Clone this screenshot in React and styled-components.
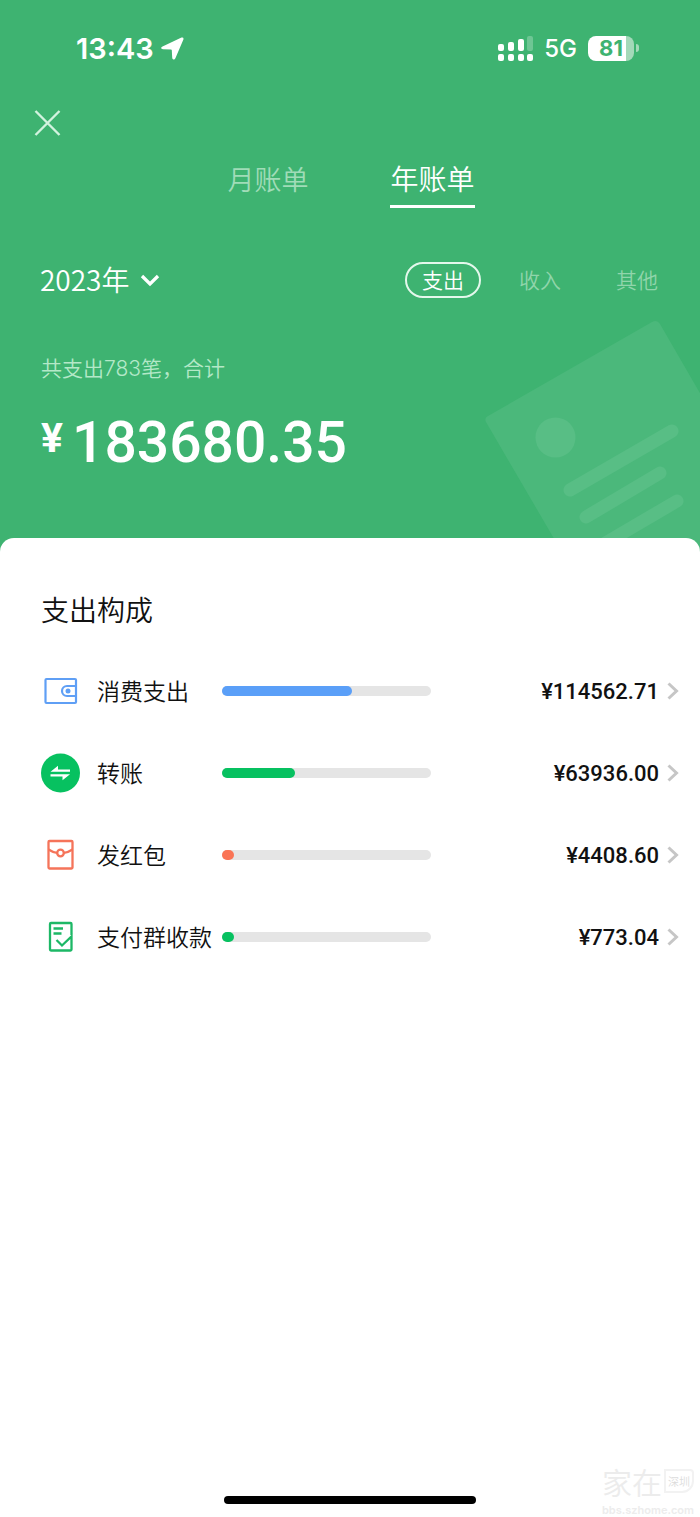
import React, { useState } from "react";
import styled, { createGlobalStyle } from "styled-components";

const GlobalStyle = createGlobalStyle`
  * {
    box-sizing: border-box;
  }

  body {
    margin: 0;
    background: #fff;
    color: #111;
    font-family: "Noto Sans CJK SC", "Noto Sans", sans-serif;
    font-weight: 350;
  }

  button,
  select {
    margin: 0;
    padding: 0;
    border: 0;
    background: none;
    color: inherit;
    font: inherit;
    cursor: pointer;
  }
`;

const Page = styled.div`
  position: relative;
  display: flex;
  flex-direction: column;
  min-height: 100vh;
`;

const Header = styled.header`
  position: relative;
  overflow: hidden;
  padding-bottom: 79px;
  background: #3eb371;
  color: #fff;
`;

const StatusBar = styled.div`
  display: flex;
  align-items: center;
  justify-content: space-between;
  height: 96px;
  padding: 0 61px 0 76px;
  font-family: Inter, sans-serif;
`;

const StatusGroup = styled.div`
  display: flex;
  align-items: center;
  gap: ${({ $gap }) => $gap}px;
`;

const Clock = styled.span`
  font-size: 29px;
  font-weight: 600;
`;

const Network = styled.span`
  font-size: 24px;
  font-weight: 500;
`;

const Battery = styled.div`
  display: flex;
  align-items: center;
  gap: 2px;
`;

const BatteryBody = styled.span`
  width: 46px;
  border-radius: 8px;
  background: linear-gradient(90deg, #fff 82%, #a3d9b9 82%);
  color: #3eb371;
  font-size: 22px;
  font-weight: 700;
  line-height: 25px;
  text-align: center;
`;

const BatteryTip = styled.span`
  width: 3px;
  height: 8px;
  border-radius: 0 4px 4px 0;
  background: #a3d9b9;
`;

const CloseRow = styled.div`
  display: flex;
  align-items: center;
  height: 54px;
  padding-left: 34px;
`;

const CloseButton = styled.button`
  display: flex;
`;

const Tabs = styled.nav`
  display: flex;
  justify-content: center;
  gap: 82px;
  padding: 8px 0 0 2px;
`;

const Tab = styled.button`
  height: 50px;
  padding-bottom: 6px;
  border-bottom: 3px solid ${({ $active }) => ($active ? "#fff" : "transparent")};
  color: ${({ $active }) => ($active ? "#fff" : "#a0dcb8")};
  font-size: ${({ $active }) => ($active ? 28 : 27)}px;
  line-height: 41px;
`;

const FilterRow = styled.div`
  display: flex;
  align-items: center;
  justify-content: space-between;
  padding: 54px 25px 0 40px;
`;

const YearPicker = styled.label`
  display: flex;
  align-items: center;
  gap: 10px;
`;

const YearSelect = styled.select`
  appearance: none;
  outline: none;
  height: 36px;
  padding-bottom: 2px;
  font-size: 28px;
  line-height: 34px;

  option {
    color: #191919;
  }
`;

const Chips = styled.div`
  display: flex;
  gap: 21px;
`;

const Chip = styled.button`
  height: 36px;
  padding: 0 15px 2px;
  border: 2px solid ${({ $active }) => ($active ? "#e4f8ec" : "transparent")};
  border-radius: 18px;
  color: ${({ $active }) => ($active ? "#fff" : "#90d5ab")};
  font-size: 21px;
  line-height: 30px;
`;

const Summary = styled.p`
  margin: 56px 0 0;
  padding: 0 41px;
  color: #b4e8c8;
  font-family: Inter, "Noto Sans CJK SC", sans-serif;
  font-size: 21px;
  line-height: 30px;
`;

const Total = styled.div`
  display: flex;
  align-items: flex-start;
  gap: 9px;
  margin-top: 27px;
  padding: 0 41px;
  font-family: Roboto, sans-serif;
  font-size: 57px;
  font-weight: 500;
  line-height: 64px;
`;

const Currency = styled.span`
  font-size: 41px;
  font-weight: 700;
  line-height: 54px;
`;

const BillArt = styled.svg`
  position: absolute;
  right: 0;
  bottom: 0;
`;

const Card = styled.main`
  position: relative;
  flex: 1;
  margin-top: -16px;
  padding: 51px 21px 40px 41px;
  border-radius: 14px 14px 0 0;
  background: #fff;
`;

const CardTitle = styled.h2`
  margin: 0 0 21px;
  font-size: 28px;
  font-weight: 350;
  line-height: 40px;
`;

const List = styled.ul`
  margin: 0;
  padding: 0;
  list-style: none;
`;

const Row = styled.button`
  display: grid;
  grid-template-columns: 40px 125px minmax(0, 1fr) minmax(0, 1fr) 12px;
  align-items: center;
  width: 100%;
  height: 82px;
  text-align: left;
`;

const RowIcon = styled.svg`
  display: block;
`;

const RowLabel = styled.span`
  padding: 0 0 2px 16px;
  font-size: 23px;
  line-height: 32px;
  white-space: nowrap;
`;

const Track = styled.span`
  display: block;
  height: 10px;
  margin: 0 6px 0 16px;
  border-radius: 5px;
  background: #e5e5e5;
`;

const Fill = styled.span`
  display: block;
  height: 10px;
  min-width: 12px;
  border-radius: 5px;
  background: ${({ $color }) => $color};
`;

const Amount = styled.span`
  padding-right: 8px;
  font-family: Roboto, sans-serif;
  font-size: 22px;
  font-weight: 500;
  text-align: right;
`;

const HomeBar = styled.div`
  align-self: center;
  width: 36%;
  height: 8px;
  margin-bottom: 13px;
  border-radius: 4px;
  background: #000;
`;

const Watermark = styled.div`
  position: absolute;
  right: 6px;
  bottom: 0;
  display: flex;
  flex-direction: column;
  color: #ececec;
`;

const WatermarkTop = styled.div`
  display: flex;
  align-items: center;
  gap: 2px;
  font-size: 30px;
  line-height: 44px;
`;

const WatermarkCity = styled.span`
  padding: 0 2px;
  border: 2px solid #f2f2f2;
  border-radius: 0 4px 12px 0;
  color: #dcdcdc;
  font-size: 11px;
  line-height: 20px;
`;

const WatermarkSite = styled.span`
  font-family: Inter, sans-serif;
  font-size: 11px;
  font-weight: 600;
  line-height: 14px;
`;

const WalletIcon = () => (
  <RowIcon width="40" height="40" viewBox="0 0 40 40" fill="none" stroke="#5f9ff5" strokeWidth="2.2">
    <rect x="4.500" y="8" width="30.500" height="24" rx="1" />
    <path d="M35 15H26a5 5 0 0 0 0 10H35" />
    <circle cx="27" cy="20" r="2.500" fill="#5f9ff5" stroke="none" />
  </RowIcon>
);

const TransferIcon = () => (
  <RowIcon width="40" height="40" viewBox="0 0 40 40">
    <circle cx="19.500" cy="20" r="19.500" fill="#07c160" />
    <path d="M9.500 18.800L17 12.800V16.600H29V18.800z" fill="#fff" />
    <path d="M29 21.200L21.500 27.200V23.400H9.500V21.200z" fill="#fff" />
  </RowIcon>
);

const RedPacketIcon = () => (
  <RowIcon width="40" height="40" viewBox="0 0 40 40" fill="none" stroke="#f5745a" strokeWidth="2.300">
    <rect x="7.500" y="6" width="24" height="27.500" rx="1" />
    <path d="M7.500 14.500c3 2 5.500 3 8.500 3.300M23 17.800c3-.3 5.500-1.300 8.500-3.300" />
    <circle cx="19.500" cy="18" r="3.300" />
  </RowIcon>
);

const GroupPayIcon = () => (
  <RowIcon width="40" height="40" viewBox="0 0 40 40" fill="none" stroke="#1db866" strokeWidth="2.300">
    <path d="M30.500 18V7a1 1 0 0 0-1-1H10a1 1 0 0 0-1 1V32.500a1 1 0 0 0 1 1H29.500a1 1 0 0 0 1-1V19.500L21 28.500L15.500 23" />
    <path d="M12.500 11.500H22M12.500 16.500H20.500" />
  </RowIcon>
);

const Chevron = () => (
  <svg width="12" height="18" viewBox="0 0 12 18" fill="none" stroke="#c6c6c6" strokeWidth="3">
    <path d="M1.500 1.500L9.500 9L1.500 16.500" />
  </svg>
);

const total = 183680.35;

const items = [
  { label: "消费支出", value: 114562.71, color: "#5a9ff8", Icon: WalletIcon },
  { label: "转账", value: 63936, color: "#07c160", Icon: TransferIcon },
  { label: "发红包", value: 4408.6, color: "#fa7455", Icon: RedPacketIcon },
  { label: "支付群收款", value: 773.04, color: "#07c160", Icon: GroupPayIcon },
];

function App() {
  const [tab, setTab] = useState("年账单");
  const [kind, setKind] = useState("支出");
  const [year, setYear] = useState("2023年");

  return (
    <Page>
      <GlobalStyle />
      <Header>
        <BillArt width="220" height="236" viewBox="0 0 220 236">
          <path
            d="M8 98L172 4Q177 1 180 6L240 110V236H83L6 104Q4 100 8 98z"
            fill="#4bb87b"
          />
          <circle cx="75.500" cy="119.500" r="20" fill="#58be85" />
          <path
            d="M90 172L192 113M106 199L180 155M110 234L197 183"
            stroke="#58be85"
            strokeWidth="13"
            strokeLinecap="round"
          />
        </BillArt>
        <StatusBar>
          <StatusGroup $gap={7}>
            <Clock>13:43</Clock>
            <svg width="23" height="23" viewBox="0 0 23 23">
              <path
                d="M1.500 9.500L20.500 .6Q23 0 22.400 2.500L14.500 21Q13.500 23.200 12 22.300Q11.300 22 11.200 20.500L10.800 13.200Q10.700 12.500 10 12.400L2 12.200Q-1.500 11.500 1.500 9.500z"
                fill="#fff"
              />
            </svg>
          </StatusGroup>
          <StatusGroup $gap={11}>
            <svg width="35" height="25" viewBox="0 0 35 25" fill="#fff">
              <rect x="0" y="8" width="6" height="7" rx="2" />
              <rect x="10" y="6" width="6" height="9" rx="2" />
              <rect x="20" y="3" width="6" height="12" rx="2" />
              <rect x="29" y="0" width="6" height="15" rx="2" opacity=".25" />
              <rect x="0" y="18" width="6" height="7" rx="2" />
              <rect x="10" y="18" width="6" height="7" rx="2" />
              <rect x="20" y="18" width="6" height="7" rx="2" />
              <rect x="29" y="18" width="6" height="7" rx="2" />
            </svg>
            <Network>5G</Network>
            <Battery>
              <BatteryBody>81</BatteryBody>
              <BatteryTip />
            </Battery>
          </StatusGroup>
        </StatusBar>
        <CloseRow>
          <CloseButton aria-label="关闭">
            <svg width="27" height="27" viewBox="0 0 27 27" stroke="#d2f3df" strokeWidth="2.400">
              <path d="M1.500 1L25.500 25M25.500 1L1.500 25" />
            </svg>
          </CloseButton>
        </CloseRow>
        <Tabs>
          {["月账单", "年账单"].map((name) => (
            <Tab key={name} $active={tab === name} onClick={() => setTab(name)}>
              {name}
            </Tab>
          ))}
        </Tabs>
        <FilterRow>
          <YearPicker>
            <YearSelect
              aria-label="年份"
              value={year}
              onChange={(e) => setYear(e.target.value)}
            >
              <option>2023年</option>
              <option>2022年</option>
            </YearSelect>
            <svg width="20" height="13" viewBox="0 0 20 13" fill="none" stroke="#fff" strokeWidth="3.300">
              <path d="M2 2L10 10L18 2" />
            </svg>
          </YearPicker>
          <Chips>
            {["支出", "收入", "其他"].map((name) => (
              <Chip key={name} $active={kind === name} onClick={() => setKind(name)}>
                {name}
              </Chip>
            ))}
          </Chips>
        </FilterRow>
        <Summary>共支出783笔，合计</Summary>
        <Total>
          <Currency>¥</Currency>
          <span>{total.toFixed(2)}</span>
        </Total>
      </Header>
      <Card>
        <CardTitle>支出构成</CardTitle>
        <List>
          {items.map(({ label, value, color, Icon }) => (
            <li key={label}>
              <Row>
                <Icon />
                <RowLabel>{label}</RowLabel>
                <Track>
                  <Fill $color={color} style={{ width: `${(value / total) * 100}%` }} />
                </Track>
                <Amount>¥{value.toFixed(2)}</Amount>
                <Chevron />
              </Row>
            </li>
          ))}
        </List>
      </Card>
      <HomeBar />
      <Watermark>
        <WatermarkTop>
          家在<WatermarkCity>深圳</WatermarkCity>
        </WatermarkTop>
        <WatermarkSite>bbs.szhome.com</WatermarkSite>
      </Watermark>
    </Page>
  );
}

export default App;
